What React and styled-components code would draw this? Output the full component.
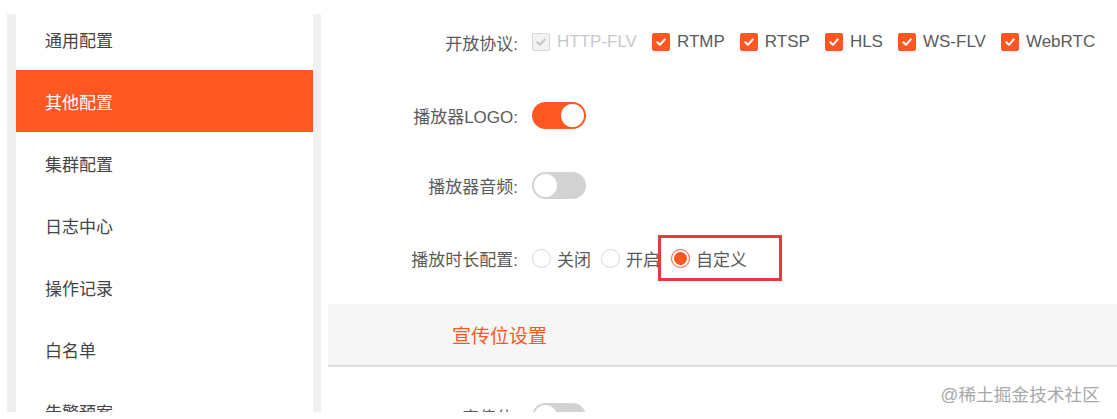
import React from "react";
import styled, { createGlobalStyle } from "styled-components";

const Global = createGlobalStyle`
  html, body { margin: 0; padding: 0; background: #fff; }
  body { font-family: "Liberation Sans", "Noto Sans CJK SC", sans-serif; }
  * { box-sizing: border-box; }
`;

const ORANGE = "#FF5722";

const Page = styled.div`
  position: relative;
  width: 1117px;
  height: 419px;
  overflow: hidden;
`;

const Frame = styled.div`
  display: flex;
  margin-top: 14px;
  height: 398px;
  overflow: hidden;
`;

const Sidebar = styled.nav`
  width: 314px;
  margin-left: 7px;
  flex-shrink: 0;
  border-left: 9px solid #efefef;
  border-right: 8px solid #f0f0f0;
  overflow: hidden;
`;

const Menu = styled.ul`
  list-style: none;
  margin: -6px 0 0 0;
  padding: 0;
`;

const MenuItem = styled.li`
  height: 62px;
  display: flex;
  align-items: center;
  padding-left: 29px;
  font-size: 17px;
  color: ${(p) => (p.$active ? "#fff" : "#444")};
  background: ${(p) => (p.$active ? ORANGE : "#fff")};
`;

const Content = styled.main`
  flex: 1;
  padding-left: 7px;
  display: flex;
  flex-direction: column;
`;

const Row = styled.div`
  display: flex;
  align-items: center;
  height: 38px;
  margin-top: ${(p) => p.$mt}px;
  flex-shrink: 0;
`;

const Label = styled.label`
  width: 190px;
  text-align: right;
  font-size: 17px;
  color: #5a5a5a;
  margin-right: 14px;
  white-space: nowrap;
`;

const Controls = styled.div`
  display: flex;
  align-items: center;
`;

const CheckItem = styled.span`
  display: inline-flex;
  align-items: center;
  gap: 7px;
  margin-right: 15px;
  font-size: 17px;
  color: ${(p) => (p.$disabled ? "#c8c8c8" : "#5a5a5a")};
`;

const Box = styled.span`
  width: 18px;
  height: 18px;
  border-radius: 2px;
  display: inline-flex;
  align-items: center;
  justify-content: center;
  background: ${(p) => (p.$disabled ? "#f2f2f2" : ORANGE)};
  border: 1px solid ${(p) => (p.$disabled ? "#d6d6d6" : ORANGE)};
`;

const Switch = styled.span`
  position: relative;
  display: inline-block;
  width: 54px;
  height: 27px;
  border-radius: 14px;
  background: ${(p) => (p.$on ? ORANGE : "#d2d2d2")};
  &::after {
    content: "";
    position: absolute;
    top: 2px;
    left: ${(p) => (p.$on ? "29px" : "2px")};
    width: 23px;
    height: 23px;
    border-radius: 50%;
    background: #fff;
  }
`;

const RadioItem = styled.span`
  display: inline-flex;
  align-items: center;
  gap: 6px;
  margin-right: 10px;
  font-size: 17px;
  color: #5a5a5a;
`;

const RadioCircle = styled.span`
  width: 19px;
  height: 19px;
  border-radius: 50%;
  border: 1px solid ${(p) => (p.$checked ? ORANGE : "#d8d8d8")};
  background: #fff;
  display: inline-flex;
  align-items: center;
  justify-content: center;
  &::after {
    content: "";
    display: ${(p) => (p.$checked ? "block" : "none")};
    width: 13px;
    height: 13px;
    border-radius: 50%;
    background: ${ORANGE};
  }
`;

const Highlight = styled.span`
  display: inline-flex;
  align-items: center;
  height: 46px;
  width: 124px;
  margin-left: -12px;
  padding-left: 10px;
  border: 3px solid #e8383d;
`;

const SectionBand = styled.div`
  margin-top: ${(p) => p.$mt}px;
  height: 63px;
  flex-shrink: 0;
  background: #f6f6f6;
  border-bottom: 2px solid #dedede;
  display: flex;
  align-items: center;
  padding-left: 124px;
  font-size: 19px;
  color: ${ORANGE};
`;

const Watermark = styled.div`
  position: absolute;
  right: 17px;
  top: 381px;
  font-size: 17.5px;
  color: #a8a8a8;
  letter-spacing: 0.2px;
`;

const Check = ({ disabled }) => (
  <svg width="12" height="12" viewBox="0 0 12 12">
    <path
      d="M2.3 6.2 L5 8.8 L9.8 3.4"
      fill="none"
      stroke={disabled ? "#c4c4c4" : "#fff"}
      strokeWidth="2"
      strokeLinecap="round"
      strokeLinejoin="round"
    />
  </svg>
);

const menu = ["通用配置", "其他配置", "集群配置", "日志中心", "操作记录", "白名单", "告警预案"];
const protocols = [
  { name: "HTTP-FLV", disabled: true },
  { name: "RTMP" },
  { name: "RTSP" },
  { name: "HLS" },
  { name: "WS-FLV" },
  { name: "WebRTC" },
];

export default function App() {
  return (
    <Page>
      <Global />
      <Frame>
        <Sidebar>
          <Menu>
            {menu.map((m) => (
              <MenuItem key={m} $active={m === "其他配置"}>
                {m}
              </MenuItem>
            ))}
          </Menu>
        </Sidebar>
        <Content>
          <Row $mt={9}>
            <Label>开放协议:</Label>
            <Controls>
              {protocols.map((p) => (
                <CheckItem key={p.name} $disabled={p.disabled}>
                  <Box $disabled={p.disabled}>
                    <Check disabled={p.disabled} />
                  </Box>
                  {p.name}
                </CheckItem>
              ))}
            </Controls>
          </Row>
          <Row $mt={35}>
            <Label>播放器LOGO:</Label>
            <Switch $on />
          </Row>
          <Row $mt={32}>
            <Label>播放器音频:</Label>
            <Switch />
          </Row>
          <Row $mt={35}>
            <Label>播放时长配置:</Label>
            <Controls>
              <RadioItem>
                <RadioCircle />
                关闭
              </RadioItem>
              <RadioItem>
                <RadioCircle />
                开启
              </RadioItem>
              <Highlight>
                <RadioItem>
                  <RadioCircle $checked />
                  自定义
                </RadioItem>
              </Highlight>
            </Controls>
          </Row>
          <SectionBand $mt={27}>宣传位设置</SectionBand>
          <Row $mt={30}>
            <Label>宣传位:</Label>
            <Switch />
          </Row>
        </Content>
      </Frame>
      <Watermark>@稀土掘金技术社区</Watermark>
    </Page>
  );
}
